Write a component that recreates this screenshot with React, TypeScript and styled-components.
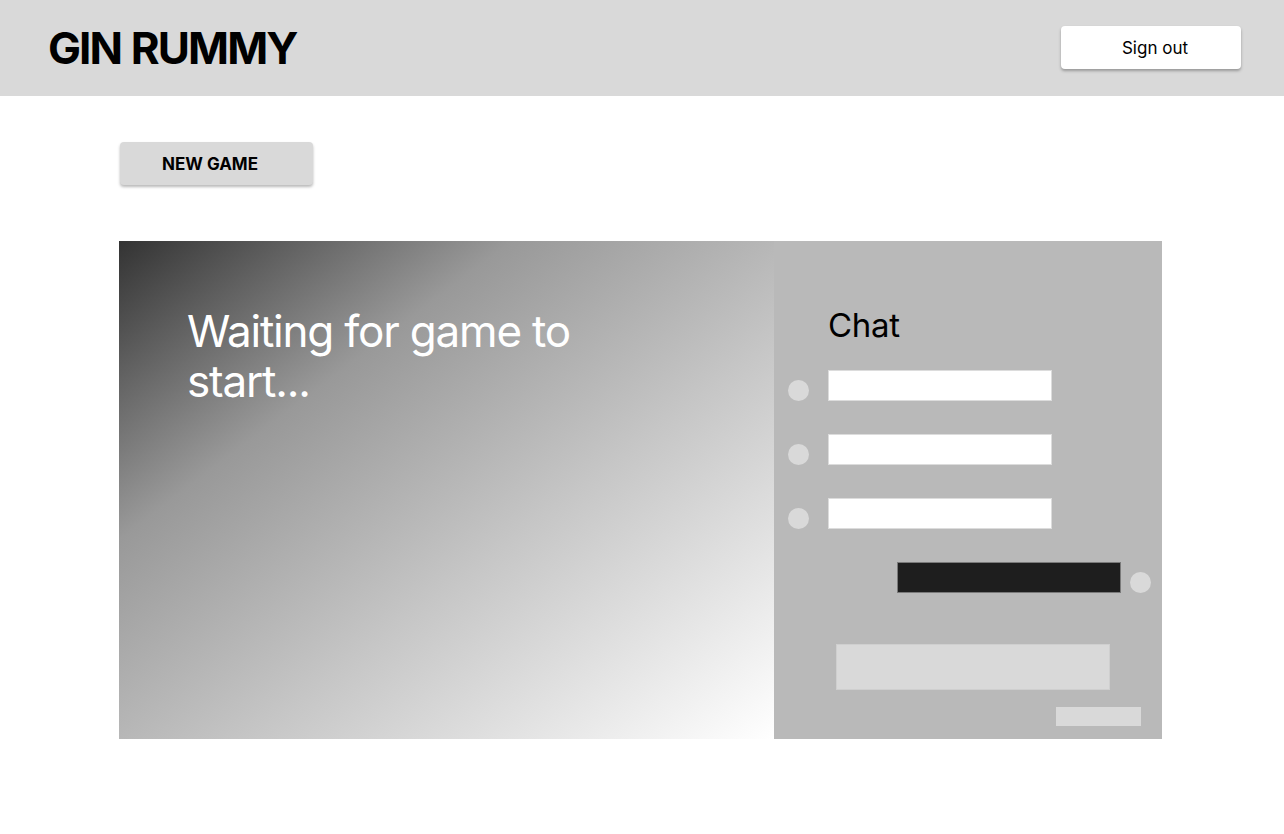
import React from "react";
import styled, { createGlobalStyle } from "styled-components";

const Global = createGlobalStyle`
  html, body { margin: 0; padding: 0; background: #ffffff; }
  body { font-family: Inter, "Noto Sans", sans-serif; }
  * { box-sizing: border-box; }
`;

const Header = styled.header`
  height: 96px;
  background: #d9d9d9;
  display: flex;
  align-items: center;
  justify-content: space-between;
  padding: 0 43px 0 48px;
`;

const Title = styled.h1`
  margin: -1px 0 0;
  font-family: Inter, sans-serif;
  font-weight: 700;
  font-size: 44px;
  letter-spacing: -1.9px;
  word-spacing: 1px;
  color: #000;
  line-height: 1;
`;

const SignOut = styled.button`
  width: 180px;
  height: 43px;
  margin-top: -1px;
  border: none;
  border-radius: 4px;
  background: #ffffff;
  box-shadow: 0 2px 3px rgba(0, 0, 0, 0.3);
  font-family: Inter, sans-serif;
  font-size: 17px;
  color: #000;
  padding: 0 0 0 8px;
`;

const Main = styled.main`
  padding: 46px 122px 0 119px;
  display: flex;
  flex-direction: column;
  align-items: flex-start;
`;

const NewGame = styled.button`
  width: 193px;
  height: 43px;
  margin-left: 1px;
  border: none;
  border-radius: 4px;
  background: #d9d9d9;
  box-shadow: 0 2px 3px rgba(0, 0, 0, 0.28);
  font-family: Inter, sans-serif;
  font-weight: 700;
  font-size: 17px;
  color: #000;
  text-align: left;
  padding: 0 0 0 42px;
`;

const Panel = styled.section`
  margin-top: 56px;
  width: 1043px;
  height: 498px;
  display: flex;
`;

const Board = styled.div`
  width: 655px;
  height: 100%;
  background: linear-gradient(to bottom right, #333333 0%, #999999 30%, #c6c6c6 60%, #ffffff 100%);
  padding: 65px 0 0 68px;
`;

const Waiting = styled.h2`
  margin: 0;
  width: 440px;
  font-family: Inter, sans-serif;
  font-weight: 400;
  font-size: 44px;
  line-height: 50px;
  letter-spacing: -1.2px;
  color: #ffffff;
`;

const Chat = styled.aside`
  flex: 1;
  background: #b9b9b9;
  display: flex;
  flex-direction: column;
  padding: 64px 11px 0 14px;
`;

const ChatTitle = styled.h3`
  margin: 0 0 0 40px;
  font-family: Inter, sans-serif;
  font-weight: 400;
  font-size: 33px;
  line-height: 40px;
  letter-spacing: -0.3px;
  color: #000;
`;

const Messages = styled.div`
  margin-top: 25px;
  display: flex;
  flex-direction: column;
  gap: 33px;
`;

const Row = styled.div<{ $mine?: boolean }>`
  display: flex;
  align-items: center;
  gap: ${(p) => (p.$mine ? "9px" : "19px")};
  justify-content: ${(p) => (p.$mine ? "flex-end" : "flex-start")};
`;

const Avatar = styled.span`
  width: 21px;
  height: 21px;
  border-radius: 50%;
  background: #d9d9d9;
  margin-top: 10px;
`;

const Bubble = styled.div<{ $mine?: boolean }>`
  width: 224px;
  height: 31px;
  background: ${(p) => (p.$mine ? "#1e1e1e" : "#ffffff")};
  border: 1px solid ${(p) => (p.$mine ? "#7a7a7a" : "#dcdcdc")};
`;

const Input = styled.div`
  margin: 51px 0 0 48px;
  width: 274px;
  height: 46px;
  background: #d9d9d9;
  border: 1px solid #cfcfcf;
`;

const Send = styled.div`
  margin: 17px 10px 0 auto;
  width: 85px;
  height: 19px;
  background: #d9d9d9;
`;

export default function App() {
  return (
    <>
      <Global />
      <Header>
        <Title>GIN RUMMY</Title>
        <SignOut>Sign out</SignOut>
      </Header>
      <Main>
        <NewGame>NEW GAME</NewGame>
        <Panel>
          <Board>
            <Waiting>Waiting for game to start...</Waiting>
          </Board>
          <Chat>
            <ChatTitle>Chat</ChatTitle>
            <Messages>
              {[0, 1, 2].map((i) => (
                <Row key={i}>
                  <Avatar />
                  <Bubble />
                </Row>
              ))}
              <Row $mine>
                <Bubble $mine />
                <Avatar />
              </Row>
            </Messages>
            <Input />
            <Send />
          </Chat>
        </Panel>
      </Main>
    </>
  );
}
